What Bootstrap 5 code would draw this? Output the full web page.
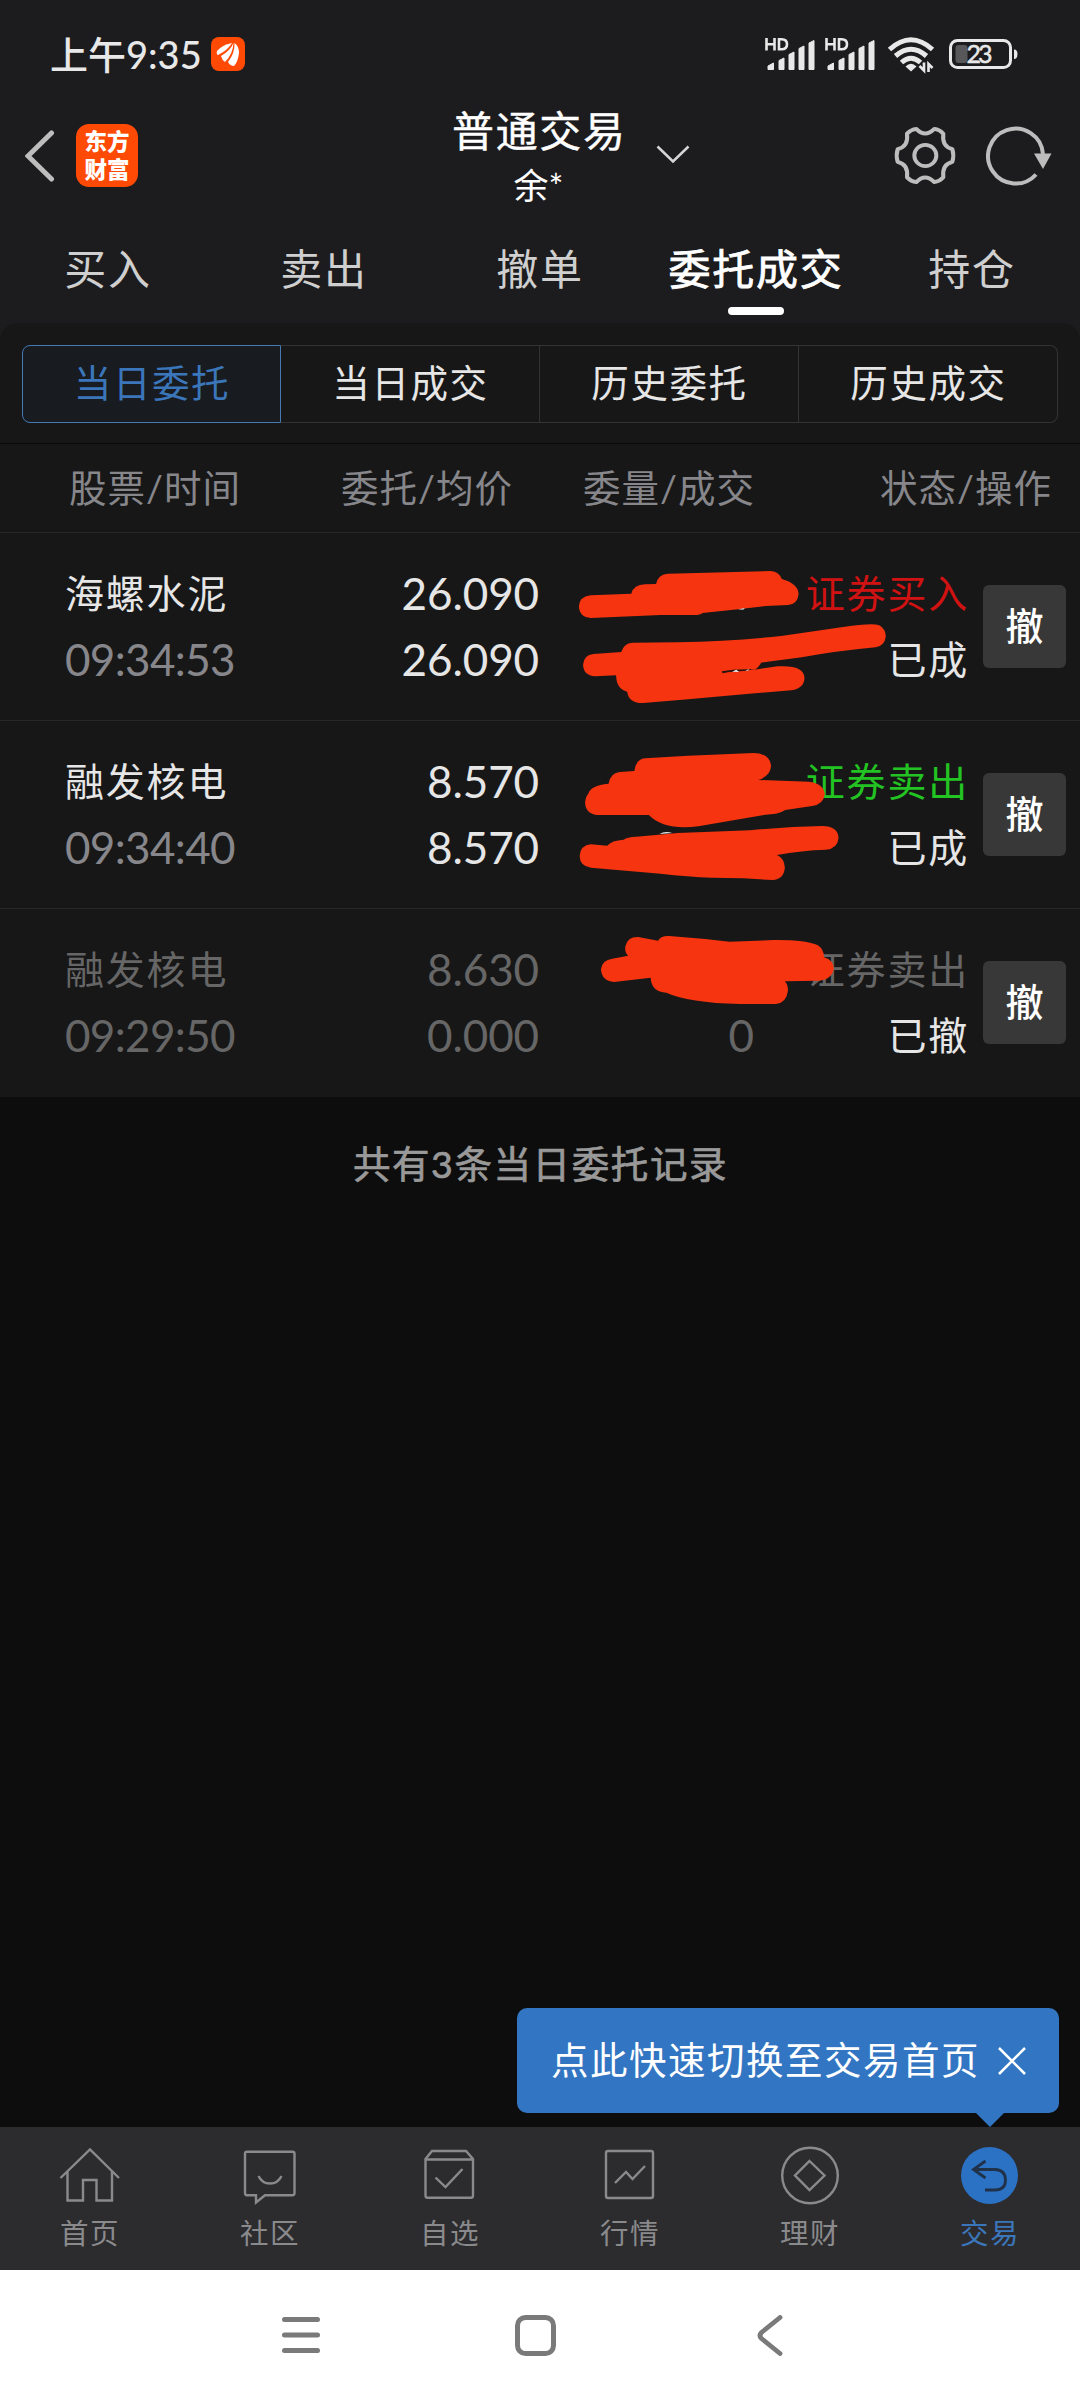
<!DOCTYPE html>
<html lang="zh-CN">
<head>
<meta charset="utf-8">
<meta name="viewport" content="width=device-width, initial-scale=1">
<title>委托成交</title>
<link rel="stylesheet" href="https://cdn.jsdelivr.net/npm/bootstrap@5.3.0/dist/css/bootstrap.min.css">
<style>
html,body{margin:0;background:#0d0d0d}
body{font-family:"Lato","Noto Sans CJK SC",sans-serif;color:#e6e6e6;width:1080px;height:2400px;overflow:hidden}
svg{display:block;flex:none;fill:none}
.top-zone{background:#1c1c1e;height:323px}
.status-line{height:107px;padding:0 60px 0 50px}
.clock{font-size:38px;font-weight:500;line-height:50px;letter-spacing:0;color:#e8e8e8}
.title-line{height:100px;padding:0 28px 0 25px}
.title-line svg,.app-logo{margin-bottom:3px}
.app-logo{width:62px;height:63px;border-radius:13px;background:#ff4a05;color:#fff;font-size:22.5px;line-height:28px;font-weight:900;margin-left:22px}
.acct-title{font-size:42px;line-height:56px;letter-spacing:1.7px;color:#fff;font-weight:400;margin-right:-1.7px;-webkit-text-stroke:.4px #fff}
.acct-name{font-size:35px;line-height:52px;color:#fff}
.main-tab{width:216px;font-size:42px;line-height:60px;letter-spacing:1.7px;color:#cfcfcf;padding-top:32px;height:116px}
.main-tab.on{color:#fff;-webkit-text-stroke:.8px #fff}
.main-tab.on::after{content:"";display:block;width:56px;height:8px;border-radius:4px;background:#fff;margin:8px auto 0}
.panel{background:#171717;border-radius:18px 18px 0 0}
.seg-wrap{padding:22px 22px 20px;height:120px}
.seg{width:259px;height:78px;border:1px solid #333;border-left-width:0;font-size:37.5px;letter-spacing:1.6px;color:#e6e6e6;padding:0 0 2px 1px}
.seg:first-child{border:1px solid #4579b3;border-radius:8px 0 0 8px;background:#181b20;color:#3b76ba}
.seg:last-child{border-radius:0 8px 8px 0}
.list-head{height:90px;border-top:1px solid #090909;border-bottom:1px solid #272728;color:#86868b;font-size:37.5px;letter-spacing:1px}
.order{height:188px;border-bottom:1px solid #272728;padding-top:27px;line-height:66px;font-size:39px;letter-spacing:1.8px}
.order:last-of-type{border-bottom:0}
.c1{width:300px;padding-left:65px}.c2{width:239px}.c3{width:215px}.c4{width:215px}
.digits{font-size:44px;letter-spacing:-.1px}
.t-time{color:#86868b;letter-spacing:-.65px}
.dim,.dim .t-time{color:#666}
.buy{color:#d01212}.sell{color:#22c322}
.cancel-btn{width:83px;height:83px;margin:25px 0 0 14px;border-radius:6px;background:#383838;color:#fff;font-weight:500;letter-spacing:0;font-size:38px;padding-bottom:3px}
.scribble{left:540px;top:0;pointer-events:none}
.summary{font-size:37.5px;letter-spacing:1.6px;color:#999;margin-top:37px;line-height:60px;padding-left:1px;-webkit-text-stroke:.7px #999}
.tip{right:21px;bottom:14px;width:542px;height:105px;border-radius:10px;background:#3275c2;color:#fff;font-size:37.5px;letter-spacing:1.5px;padding:0 33px 0 34px}
.tip::after{content:"";position:absolute;left:459px;top:100%;border:14px solid transparent;border-top-color:#3275c2;border-bottom:0}
.app-nav{height:143px;background:#2c2c2e;color:#8a8a8d;font-size:28.5px;letter-spacing:1.5px}
.nav-cell{width:180px;padding-top:17px;line-height:40px}
.nav-cell svg{margin-bottom:5px}
.sys-nav{height:130px;background:#fff;padding:0 297px 0 282px}
</style>
<script src="https://cdn.jsdelivr.net/npm/bootstrap@5.3.0/dist/js/bootstrap.bundle.min.js"></script>
</head>
<body class="d-flex flex-column">
<header class="top-zone">
  <div class="status-line d-flex align-items-center">
    <span class="clock">上午9:35</span>
    <svg width="34" height="34" viewBox="0 0 34 34" style="margin-left:9px"><rect width="34" height="34" rx="8" fill="#ff4a05"/><g fill="#fff"><path d="M6 14Q11 8 21 6Q17 13 7 18Q5 17 6 14Z"/><path d="M10 19Q19 14 22.500 6Q22 17 14 25Q11 23 10 19Z"/><path d="M17 25Q24 16 23.500 6Q28 9 28 16Q27 25 23 29Q19 29 17 25Z"/></g></svg>
    <svg class="ms-auto" width="256" height="40" viewBox="764 34 256 40">
      <g id="sig"><g stroke="#e8e8e8" stroke-width="2.600"><path d="M766.500 38V50.500M774.500 38V50.500M766.500 44.200H774.500M779 39.300V49.300H781.500Q787 49.300 787 44.300Q787 39.300 781.500 39.300Z"/></g><path fill="#e8e8e8" stroke="#e8e8e8" stroke-linejoin="round" d="M768 69.500V66L773.500 63V69.500ZM779 69.500V60.500L784 58V69.500ZM789 69.500V54.500L794 52V69.500ZM799 69.500V48.500L804 46V69.500ZM809 69.500V43L814 40.500V69.500Z"/></g>
      <use href="#sig" x="60"/>
      <g stroke="#e8e8e8" stroke-width="5"><path d="M889.500 49.500Q911 30 932.500 49.500"/><path d="M895.500 56Q911 42.500 926.500 56"/><path d="M901.500 62.500Q911 54 920.500 62.500"/></g>
      <path fill="#e8e8e8" d="M905.500 66.500Q911 61 916.500 66.500L911 71.500Z"/>
      <path stroke="#e8e8e8" stroke-width="2.600" d="M919.500 66L924 70.500V62.500M928.500 72V64L932.500 68"/>
      <rect x="950.500" y="40.500" width="60" height="27" rx="7" stroke="#e8e8e8" stroke-width="3"/><rect x="955.500" y="45" width="12" height="18" rx="3" fill="#58585a"/><path d="M1014 49.500Q1017.500 49.500 1017.500 54Q1017.500 59 1014 59Z" fill="#e8e8e8"/>
      <text x="966.500" y="63" font-family="Lato" font-size="25" fill="#e8e8e8" stroke="#e8e8e8" stroke-width=".5" textLength="26">23</text>
    </svg>
  </div>
  <div class="title-line d-flex align-items-center">
    <div class="d-flex align-items-center" style="flex:1 1 0">
      <svg width="29" height="52" viewBox="0 0 29 52"><path d="M26.500 3L3 26L26.500 49" stroke="#bdbdbd" stroke-width="5" stroke-linecap="round"/></svg>
      <div class="app-logo d-flex flex-column justify-content-center text-center"><span>东方</span><span>财富</span></div>
    </div>
    <div class="text-center"><div class="acct-title">普通交易</div><div class="acct-name">余*</div></div>
    <div class="d-flex align-items-center" style="flex:1 1 0">
      <svg width="34" height="19" viewBox="0 0 34 19" style="margin-left:31px;margin-bottom:5px"><path d="M1.500 1.500L17 16.500L32.500 1.500" stroke="#d5d5d5" stroke-width="2.500"/></svg>
      <svg class="ms-auto" width="64" height="61" viewBox="1020 370 192 190" preserveAspectRatio="none" style="margin-bottom:4px"><g stroke="#bdbdbd" stroke-width="12" stroke-linejoin="round"><path d="M1090 382Q1116 411 1144 382Q1160 384 1171 397Q1166 437 1198 445Q1204 465 1198 485Q1166 493 1171 533Q1160 546 1144 548Q1116 519 1090 548Q1074 546 1062 533Q1067 493 1034 485Q1028 465 1034 445Q1067 437 1062 397Q1074 384 1090 382Z"/><circle cx="1117" cy="465" r="33"/></g></svg>
      <svg width="66" height="60" viewBox="0 0 66 60" style="margin-left:29px"><path d="M50 48.500A27.500 27.500 0 1 1 57 28" stroke="#bdbdbd" stroke-width="4"/><path d="M48 27.500H65.500L57 43Z" fill="#bdbdbd"/></svg>
    </div>
  </div>
  <nav class="d-flex text-center">
    <div class="main-tab">买入</div><div class="main-tab">卖出</div><div class="main-tab">撤单</div><div class="main-tab on">委托成交</div><div class="main-tab">持仓</div>
  </nav>
</header>
<main class="flex-grow-1 position-relative">
  <div style="background:#1c1c1e"><section class="panel">
    <div class="seg-wrap d-flex">
      <div class="seg d-flex align-items-center justify-content-center">当日委托</div>
      <div class="seg d-flex align-items-center justify-content-center">当日成交</div>
      <div class="seg d-flex align-items-center justify-content-center">历史委托</div>
      <div class="seg d-flex align-items-center justify-content-center">历史成交</div>
    </div>
    <div class="list-head d-flex align-items-center text-end">
      <div style="width:241px">股票/时间</div><div style="width:272px">委托/均价</div><div style="width:242px">委量/成交</div><div style="width:297px">状态/操作</div>
    </div>
    <div class="order d-flex">
      <div class="c1"><div>海螺水泥</div><div class="digits t-time">09:34:53</div></div>
      <div class="c2 text-end digits"><div>26.090</div><div>26.090</div></div>
      <div class="c3"></div>
      <div class="c4 text-end"><div class="buy">证券买入</div><div>已成</div></div>
      <div class="cancel-btn d-flex align-items-center justify-content-center">撤</div>
    </div>
    <div class="order d-flex">
      <div class="c1"><div>融发核电</div><div class="digits t-time">09:34:40</div></div>
      <div class="c2 text-end digits"><div>8.570</div><div>8.570</div></div>
      <div class="c3"></div>
      <div class="c4 text-end"><div class="sell">证券卖出</div><div>已成</div></div>
      <div class="cancel-btn d-flex align-items-center justify-content-center">撤</div>
    </div>
    <div class="order d-flex">
      <div class="c1 dim"><div>融发核电</div><div class="digits t-time">09:29:50</div></div>
      <div class="c2 text-end digits dim"><div>8.630</div><div>0.000</div></div>
      <div class="c3 text-end digits dim"><div>&nbsp;</div><div>0</div></div>
      <div class="c4 text-end"><div class="dim">证券卖出</div><div>已撤</div></div>
      <div class="cancel-btn d-flex align-items-center justify-content-center">撤</div>
    </div>
  </section></div>
  <!-- marker strokes hiding the quantities -->
  <svg class="scribble position-absolute" width="540" height="797" viewBox="0 9 1568 2391" preserveAspectRatio="none">
    <g fill="#f63410">
      <path d="M148 826L265 821Q272 794 305 793L337 792Q343 762 372 761L670 753Q694 755 702 777Q749 790 751 822Q748 853 720 855L655 858L575 868L472 879Q465 885 450 885L350 885L148 894Q114 892 113 859Q115 829 148 826Z"/>
      <path d="M155 1002L236 996Q243 970 268 968L400 967Q560 963 700 948L900 918Q970 908 985 916Q1004 927 1004 950Q1001 976 975 982Q860 993 760 1012L642 1028Q634 1044 622 1049L690 1039Q766 1034 768 1073Q768 1104 730 1111L600 1122L430 1138L300 1149Q258 1150 253 1115Q221 1106 221 1066L160 1069Q126 1066 125 1034Q127 1005 155 1002Z"/>
      <g transform="translate(0 1200)">
      <path d="M199 191Q205 158 232 156L274 153Q278 118 305 115L430 107L620 99Q667 100 671 138Q669 168 634 180L780 185Q824 190 827 223Q823 254 790 258L712 270Q700 279 685 281L655 284L460 319Q360 332 316 285L165 285Q131 280 131 246Q133 229 140 222Q146 196 199 191Z"/>
      <path d="M148 373L195 377Q208 361 243 359Q252 351 280 350L400 339L610 331Q720 320 820 318Q864 318 867 353Q864 386 830 389Q760 391 688 405Q710 415 711 443Q708 478 675 480L590 475L500 473Q430 470 350 461L148 443Q116 439 115 408Q117 376 148 373Z"/>
      <path d="M256 707Q245 697 248 679Q254 650 285 651L343 662Q349 647 375 648L480 657L550 665L680 660Q770 659 807 676Q824 688 825 712Q853 721 853 747Q848 778 810 782L711 784Q720 793 720 812Q716 848 685 852L580 852Q430 848 367 818Q324 816 321 773L215 786Q179 783 177 748Q180 720 210 716Z"/>
      </g>
    </g>
    <path d="M528 1054L560 1049L622 1047L600 1052L550 1056L530 1060Z" fill="#271310"/><path d="M558 1055L570 1049L578 1056ZM596 1051L608 1048L604 1052Z" fill="#eee"/><path d="M347 1542Q363 1531 384 1539Z" fill="#e6e6e6"/><path d="M575 868L595 864L590 869Z" fill="#ddd"/>
  </svg>
  <div class="summary text-center">共有3条当日委托记录</div>
  <div class="tip position-absolute d-flex align-items-center justify-content-between"><span>点此快速切换至交易首页</span><svg width="28" height="28" viewBox="0 0 28 28"><path d="M1 1L27 27M27 1L1 27" stroke="#fff" stroke-width="2.500"/></svg></div>
</main>
<footer>
  <div class="app-nav d-flex text-center">
    <div class="nav-cell d-flex flex-column align-items-center"><svg width="64" height="64" viewBox="58 2144 64 64" stroke="#8a8a8d" stroke-width="2.400"><path d="M60.500 2178L90 2149.500L119 2178M67.500 2171.500V2200.500H83V2180H96.500V2200.500H112V2171.500"/></svg>首页</div>
    <div class="nav-cell d-flex flex-column align-items-center"><svg width="64" height="64" viewBox="238 2144 64 64" stroke="#8a8a8d" stroke-width="2.400"><path d="M247 2151.800H292.500Q294.500 2151.800 294.500 2153.800V2193Q294.500 2195.200 292.500 2195.200H265L256 2202.500V2195.200H247Q245 2195.200 245 2193V2153.800Q245 2151.800 247 2151.800ZM258.500 2176Q262 2183.500 270 2183.500Q278 2183.500 281.500 2176"/></svg>社区</div>
    <div class="nav-cell d-flex flex-column align-items-center"><svg width="64" height="64" viewBox="418 2144 64 64" stroke="#8a8a8d" stroke-width="2.400"><path d="M425.500 2159L432 2151H466L473 2159V2195.500Q473 2197.800 471 2197.800H427.500Q425.500 2197.800 425.500 2195.500ZM425.500 2159.500H473M435.500 2177.500L445.500 2187L462.500 2169"/></svg>自选</div>
    <div class="nav-cell d-flex flex-column align-items-center"><svg width="64" height="64" viewBox="598 2144 64 64" stroke="#8a8a8d" stroke-width="2.400"><rect x="606" y="2151" width="47" height="47" rx="2"/><path d="M615 2183L626 2172L632.500 2179L645 2166"/></svg>行情</div>
    <div class="nav-cell d-flex flex-column align-items-center"><svg width="64" height="64" viewBox="778 2144 64 64" stroke="#8a8a8d" stroke-width="2.400"><circle cx="810" cy="2175.500" r="27.800"/><path d="M809.500 2161L824.500 2175.500L809.500 2190L795 2175.500Z"/></svg>理财</div>
    <div class="nav-cell d-flex flex-column align-items-center" style="color:#3b76ba"><svg width="64" height="64" viewBox="958 2144 64 64"><circle cx="989.500" cy="2175.500" r="28.500" fill="#2b71c4"/><path d="M985.500 2161L973.500 2169.500L985.500 2178M973.500 2169.500H995Q1005.500 2170 1005.500 2180Q1005.500 2190 995 2190H985" stroke="#20324a" stroke-width="2.800"/></svg>交易</div>
  </div>
  <div class="sys-nav d-flex align-items-center">
    <svg width="38" height="38" viewBox="0 0 38 38"><path d="M2.500 3.500H35.500M2.500 19H35.500M2.500 34.500H35.500" stroke="#7a7a7a" stroke-width="5" stroke-linecap="round"/></svg>
    <svg width="41" height="41" viewBox="0 0 41 41" style="margin-left:195px"><rect x="2.500" y="2.500" width="36" height="36" rx="8" stroke="#7a7a7a" stroke-width="5"/></svg>
    <svg class="ms-auto" width="26" height="41" viewBox="0 0 26 41"><path d="M23 2.500L4.500 17.500Q1.500 20.500 4.500 23.500L23 38.500" stroke="#7a7a7a" stroke-width="4.800" stroke-linecap="round"/></svg>
  </div>
</footer>
</body>
</html>
